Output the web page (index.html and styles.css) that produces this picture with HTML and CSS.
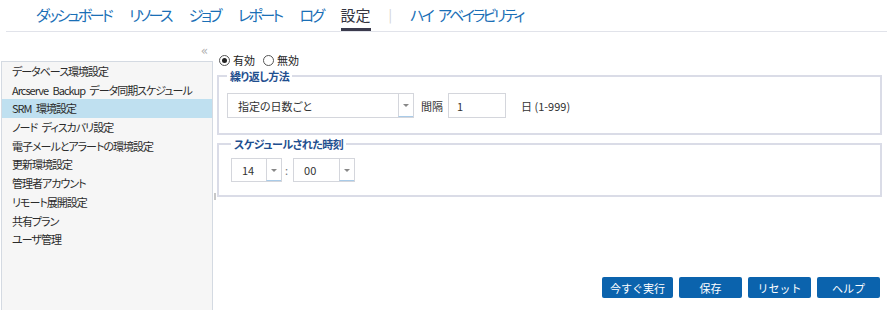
FILE: index.html
```html
<!DOCTYPE html>
<html lang="ja">
<head>
    <meta charset="UTF-8">
    <meta name="viewport" content="width=device-width, initial-scale=1.0">
    <title>設定</title>
    <link rel="stylesheet" href="styles.css">
</head>
<body>

<header class="topnav">
    <nav class="menu">
        <a class="menu-item" href="#">ダッシュボード</a>
        <a class="menu-item" href="#">リソース</a>
        <a class="menu-item" href="#">ジョブ</a>
        <a class="menu-item" href="#">レポート</a>
        <a class="menu-item" href="#">ログ</a>
        <a class="menu-item active" href="#">設定</a>
        <span class="menu-sep">|</span>
        <a class="menu-item" href="#">ハイ アベイラビリティ</a>
    </nav>
</header>

<div class="main">
    <aside class="sidebar">
        <div class="sidebar-head">
            <span class="collapse-btn">&laquo;</span>
        </div>
        <ul class="settings-list">
            <li>データベース環境設定</li>
            <li>Arcserve Backup データ同期スケジュール</li>
            <li class="selected">SRM 環境設定</li>
            <li>ノード ディスカバリ設定</li>
            <li>電子メールとアラートの環境設定</li>
            <li>更新環境設定</li>
            <li>管理者アカウント</li>
            <li>リモート展開設定</li>
            <li>共有プラン</li>
            <li>ユーザ管理</li>
        </ul>
    </aside>

    <div class="splitter"><span class="splitter-grip"></span></div>

    <section class="content">
        <div class="radio-row">
            <label class="radio"><span class="radio-dot checked"></span>有効</label>
            <label class="radio"><span class="radio-dot"></span>無効</label>
        </div>

        <fieldset class="group">
            <legend>繰り返し方法</legend>
            <div class="field-row">
                <div class="combo combo-wide">
                    <span class="combo-text">指定の日数ごと</span>
                    <span class="combo-arrow"></span>
                </div>
                <span class="field-label">間隔</span>
                <div class="textbox">1</div>
                <span class="field-hint">日 (1-999)</span>
            </div>
        </fieldset>

        <fieldset class="group group-time">
            <legend>スケジュールされた時刻</legend>
            <div class="field-row time-row">
                <div class="combo combo-hour">
                    <span class="combo-text">14</span>
                    <span class="combo-arrow"></span>
                </div>
                <span class="time-sep">:</span>
                <div class="combo combo-min">
                    <span class="combo-text">00</span>
                    <span class="combo-arrow"></span>
                </div>
            </div>
        </fieldset>

        <div class="actions">
            <button class="btn btn-run">今すぐ実行</button>
            <button class="btn">保存</button>
            <button class="btn">リセット</button>
            <button class="btn">ヘルプ</button>
        </div>
    </section>
</div>

</body>
</html>
```

FILE: styles.css
```css
body {
    margin: 0;
    font-family: "Noto Sans CJK JP", "Noto Sans", sans-serif;
    font-feature-settings: "palt";
    font-size: 11px;
    color: #333;
    background: #fff;
    height: 100vh;
    overflow: hidden;
}

/* top navigation */
.topnav {
    height: 31px;
    margin-left: 6px;
    border-bottom: 1px solid #e1e3ea;
}

.menu {
    display: flex;
    align-items: stretch;
    gap: 18px;
    height: 31px;
    padding-left: 30px;
}

.menu-item {
    display: flex;
    align-items: center;
    padding-top: 1px;
    padding-bottom: 1px;
    font-size: 15px;
    letter-spacing: -2.6px;
    word-spacing: 5px;
    color: #1a6fb6;
    text-decoration: none;
    border-bottom: 3px solid transparent;
    box-sizing: border-box;
    white-space: pre;
}

.menu-item.active {
    color: #34343f;
    letter-spacing: 0;
    border-bottom-color: #3a3a4c;
}

.menu-sep {
    display: flex;
    align-items: center;
    color: #d0d0d0;
    font-size: 13px;
    padding-bottom: 2px;
}

/* main area */
.main {
    display: flex;
    height: calc(100vh - 32px);
}

.sidebar {
    width: 213px;
    display: flex;
    flex-direction: column;
}

.sidebar-head {
    height: 29px;
    display: flex;
    justify-content: flex-end;
    align-items: center;
    padding-right: 5px;
    padding-top: 8px;
    box-sizing: border-box;
}

.collapse-btn {
    color: #b0b0b0;
    font-size: 12px;
    font-family: "DejaVu Sans", sans-serif;
}

.settings-list {
    list-style: none;
    margin: 0 0 0 1px;
    padding: 0;
    flex: 1;
    background: #f6f6f6;
    border: 1px solid #d4dae2;
    border-bottom: none;
}

.settings-list li {
    height: 18.7px;
    line-height: 18.7px;
    padding-left: 10px;
    white-space: pre;
    letter-spacing: -1px;
    word-spacing: 3px;
    color: #2b2b2b;
}

.settings-list li.selected {
    background: #bfe0f0;
}

.splitter {
    width: 4px;
    position: relative;
}

.splitter-grip {
    position: absolute;
    left: 1px;
    top: 161px;
    width: 2px;
    height: 7px;
    background: #c8c8c8;
}

/* content */
.content {
    flex: 1;
    display: flex;
    flex-direction: column;
    padding: 22px 5px 12px 0;
    min-width: 0;
}

.radio-row {
    display: flex;
    align-items: center;
    gap: 8px;
    padding-left: 2px;
    height: 12px;
    margin-bottom: 3px;
}

.radio {
    display: flex;
    align-items: center;
    gap: 3px;
    color: #222;
}

.radio-dot {
    width: 9px;
    height: 9px;
    border: 1px solid #555;
    border-radius: 50%;
    box-sizing: content-box;
    position: relative;
}

.radio-dot.checked::after {
    content: "";
    position: absolute;
    left: 2px;
    top: 2px;
    width: 5px;
    height: 5px;
    border-radius: 50%;
    background: #222;
}

.group {
    margin: 0;
    padding: 10px 8px 15px 8px;
    border: 2px solid #dadce7;
    min-width: 0;
}

.group legend {
    padding: 0 3px;
    font-weight: bold;
    color: #1f4f8f;
    line-height: 14px;
    letter-spacing: -0.5px;
}

.group-time {
    margin-top: 2px;
    padding: 7px 8px 13px 12px;
}

.field-row {
    display: flex;
    align-items: center;
}

.combo {
    display: flex;
    height: 25px;
    border: 1px solid #d4d6dc;
    box-sizing: border-box;
    background: #fff;
}

.combo-text {
    flex: 1;
    display: flex;
    align-items: center;
    padding-left: 10px;
}

.combo-arrow {
    width: 14px;
    border-left: 1px solid #d4d6dc;
    border-bottom: 1px solid #a9cbe8;
    position: relative;
}

.combo-arrow::after {
    content: "";
    position: absolute;
    left: 4px;
    top: 10px;
    border-left: 3px solid transparent;
    border-right: 3px solid transparent;
    border-top: 3px solid #888;
}

.combo-wide {
    width: 187px;
}

.combo-hour {
    width: 51px;
    height: 24px;
}

.combo-min {
    width: 62px;
    height: 24px;
}

.field-label {
    margin-left: 7px;
    margin-right: 5px;
}

.textbox {
    width: 58px;
    height: 25px;
    border: 1px solid #d4d6dc;
    box-sizing: border-box;
    padding-left: 8px;
    display: flex;
    align-items: center;
}

.field-hint {
    margin-left: 15px;
}

.time-sep {
    margin: 0 5px 0 3px;
    color: #777;
}

.actions {
    margin-top: auto;
    display: flex;
    justify-content: flex-end;
    gap: 6px;
    padding-right: 2px;
}

.btn {
    min-width: 63px;
    height: 21px;
    border: none;
    border-radius: 2px;
    background: #0b63ad;
    color: #fff;
    font-family: inherit;
    font-size: 11px;
    padding: 0 8px;
    cursor: pointer;
}

.btn-run {
    min-width: 70px;
}
```
